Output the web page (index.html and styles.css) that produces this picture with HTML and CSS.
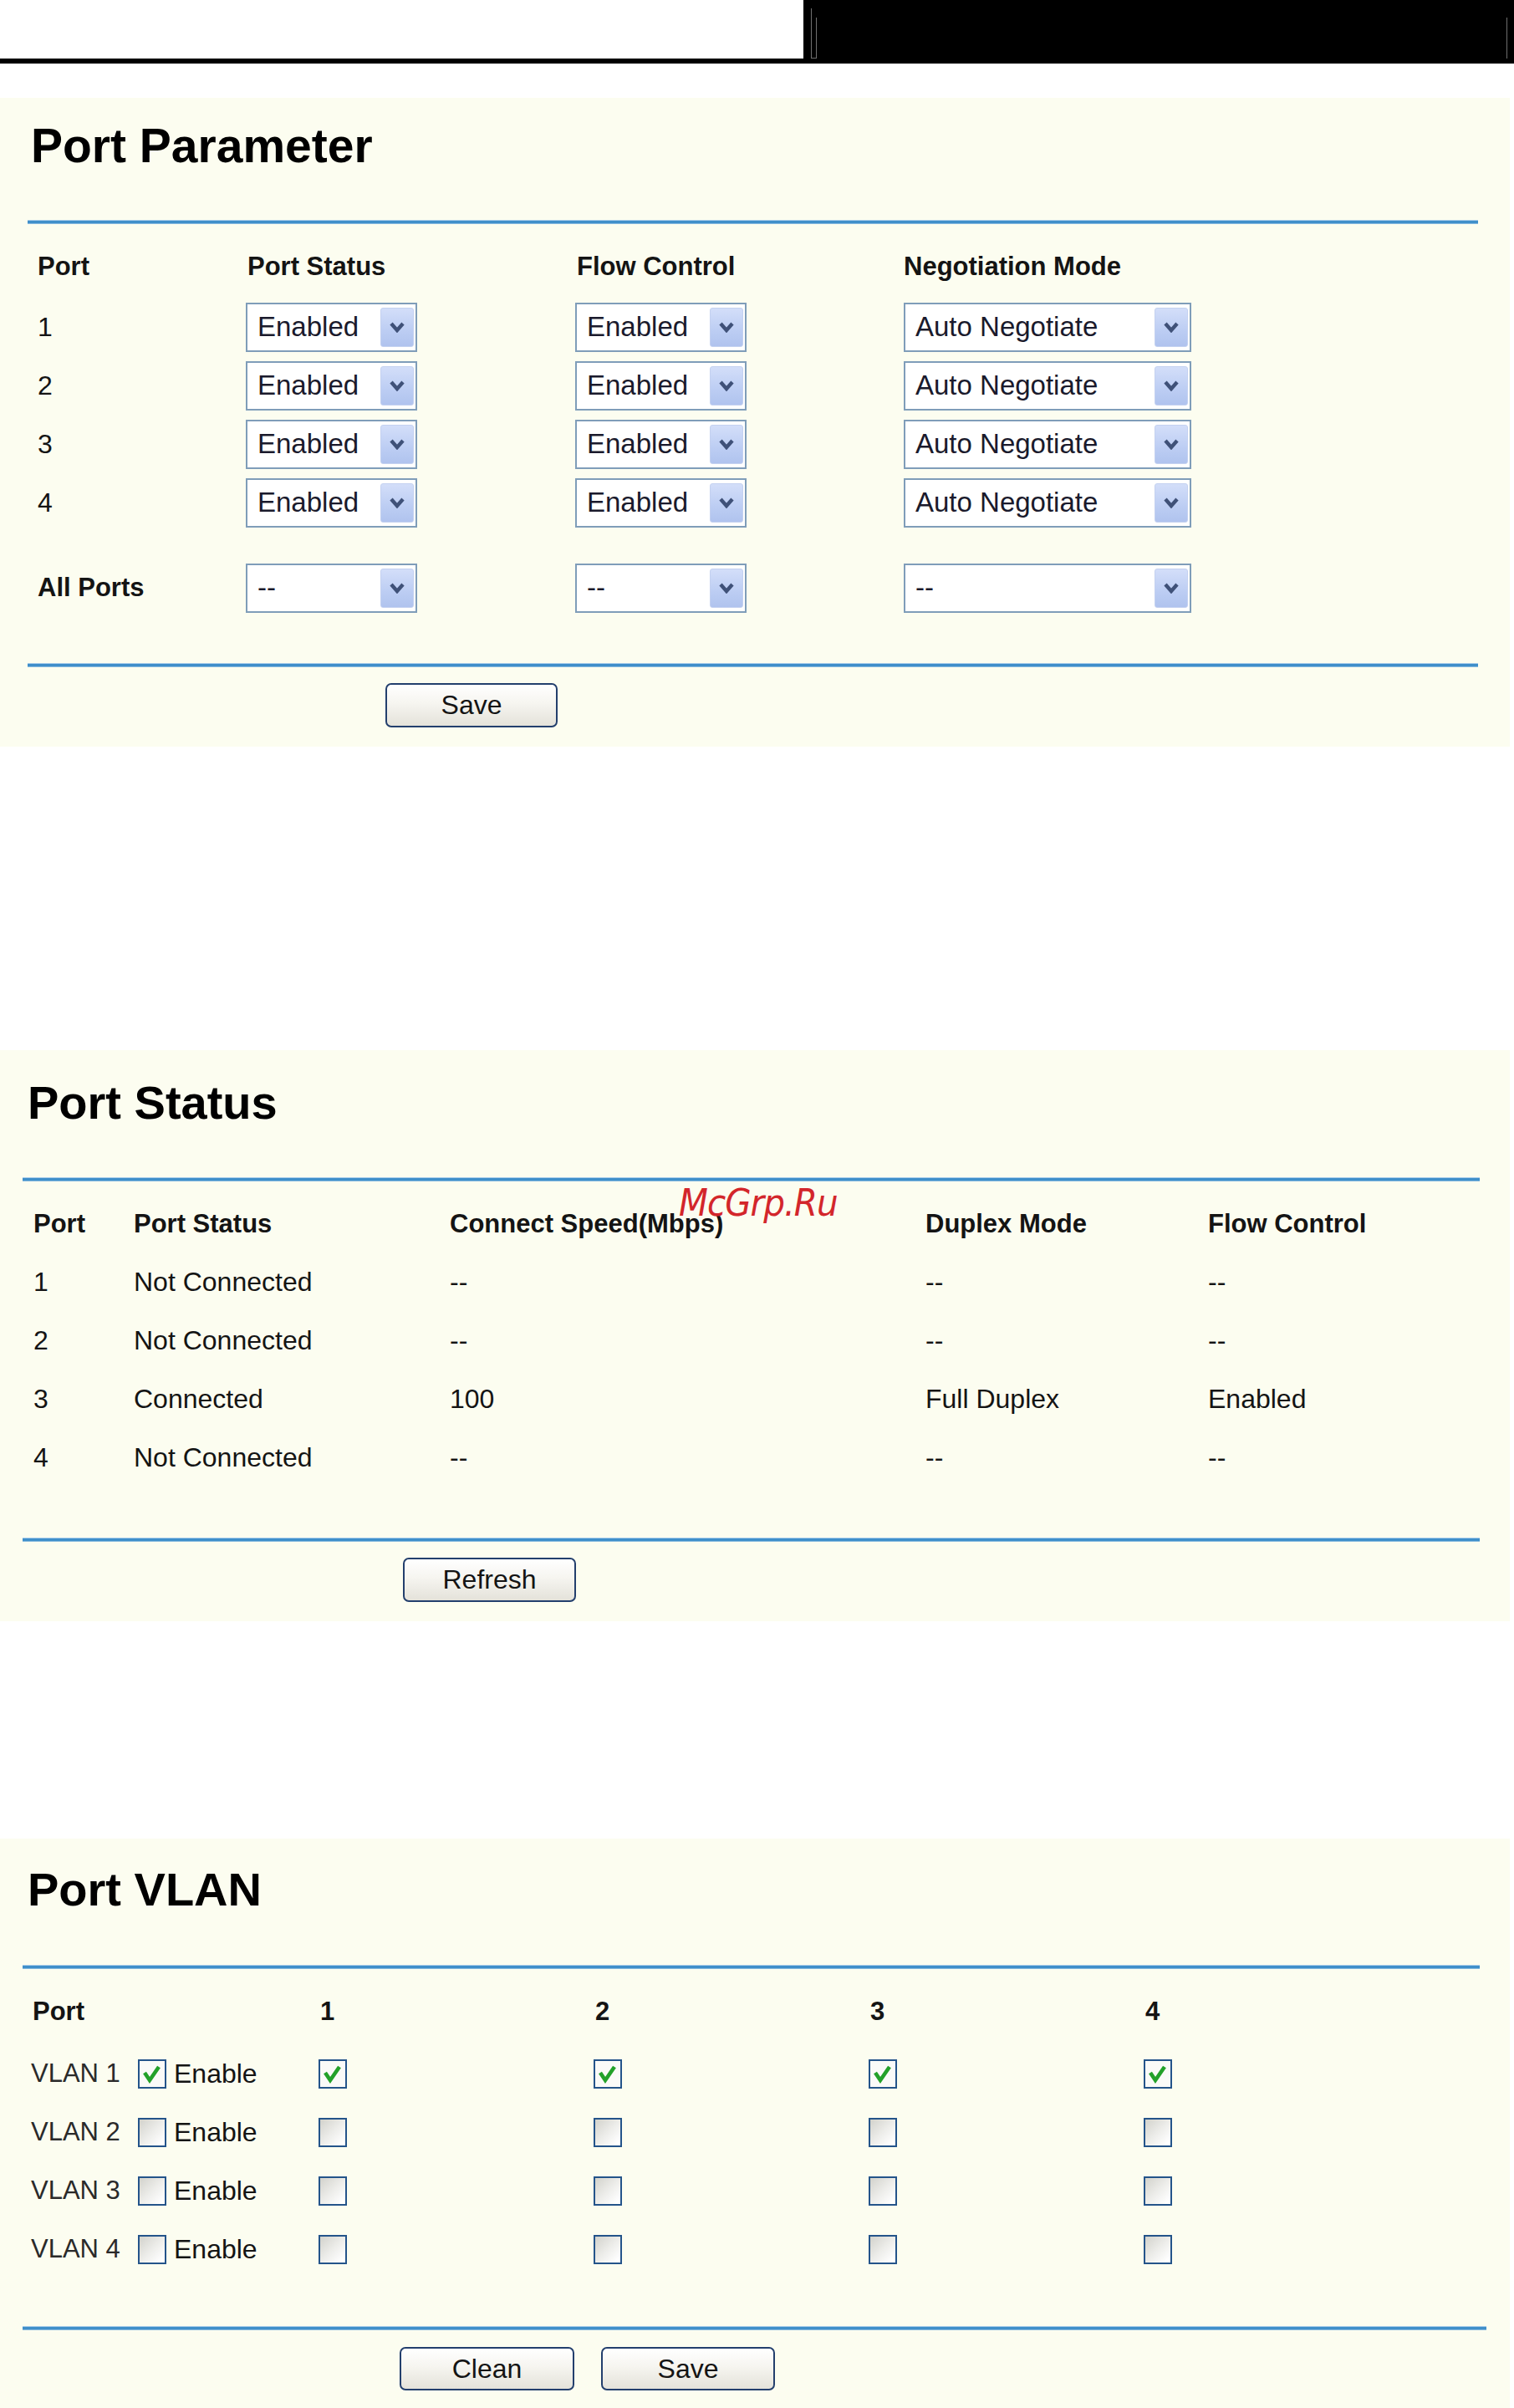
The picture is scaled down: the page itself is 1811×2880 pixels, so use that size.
FILE: index.html
```html
<!DOCTYPE html>
<html>
<head>
<meta charset="utf-8">
<title>Port Settings</title>
<link rel="stylesheet" href="styles.css">
</head>
<body>
<div class="topbar">
  <div class="topbar-left"></div>
  <div class="topbar-right"><div class="frame-a"></div><div class="frame-b"></div></div>
</div>

<section class="panel panel-param">
  <h1 class="title">Port Parameter</h1>
  <div class="rule"></div>
  <div class="prow phead">
    <div>Port</div><div class="hpad">Port Status</div><div class="hpad">Flow Control</div><div>Negotiation Mode</div>
  </div>
  <div class="prow"><div class="lbl">1</div>
    <div class="select"><span class="val">Enabled</span><span class="arrow"><svg width="20" height="14" viewBox="0 0 20 14"><polyline points="3,3 10,11 17,3" fill="none" stroke="#3f5178" stroke-width="4.4"/></svg></span></div>
    <div class="select"><span class="val">Enabled</span><span class="arrow"><svg width="20" height="14" viewBox="0 0 20 14"><polyline points="3,3 10,11 17,3" fill="none" stroke="#3f5178" stroke-width="4.4"/></svg></span></div>
    <div class="select wide"><span class="val">Auto Negotiate</span><span class="arrow"><svg width="20" height="14" viewBox="0 0 20 14"><polyline points="3,3 10,11 17,3" fill="none" stroke="#3f5178" stroke-width="4.4"/></svg></span></div>
  </div>
  <div class="prow"><div class="lbl">2</div>
    <div class="select"><span class="val">Enabled</span><span class="arrow"><svg width="20" height="14" viewBox="0 0 20 14"><polyline points="3,3 10,11 17,3" fill="none" stroke="#3f5178" stroke-width="4.4"/></svg></span></div>
    <div class="select"><span class="val">Enabled</span><span class="arrow"><svg width="20" height="14" viewBox="0 0 20 14"><polyline points="3,3 10,11 17,3" fill="none" stroke="#3f5178" stroke-width="4.4"/></svg></span></div>
    <div class="select wide"><span class="val">Auto Negotiate</span><span class="arrow"><svg width="20" height="14" viewBox="0 0 20 14"><polyline points="3,3 10,11 17,3" fill="none" stroke="#3f5178" stroke-width="4.4"/></svg></span></div>
  </div>
  <div class="prow"><div class="lbl">3</div>
    <div class="select"><span class="val">Enabled</span><span class="arrow"><svg width="20" height="14" viewBox="0 0 20 14"><polyline points="3,3 10,11 17,3" fill="none" stroke="#3f5178" stroke-width="4.4"/></svg></span></div>
    <div class="select"><span class="val">Enabled</span><span class="arrow"><svg width="20" height="14" viewBox="0 0 20 14"><polyline points="3,3 10,11 17,3" fill="none" stroke="#3f5178" stroke-width="4.4"/></svg></span></div>
    <div class="select wide"><span class="val">Auto Negotiate</span><span class="arrow"><svg width="20" height="14" viewBox="0 0 20 14"><polyline points="3,3 10,11 17,3" fill="none" stroke="#3f5178" stroke-width="4.4"/></svg></span></div>
  </div>
  <div class="prow"><div class="lbl">4</div>
    <div class="select"><span class="val">Enabled</span><span class="arrow"><svg width="20" height="14" viewBox="0 0 20 14"><polyline points="3,3 10,11 17,3" fill="none" stroke="#3f5178" stroke-width="4.4"/></svg></span></div>
    <div class="select"><span class="val">Enabled</span><span class="arrow"><svg width="20" height="14" viewBox="0 0 20 14"><polyline points="3,3 10,11 17,3" fill="none" stroke="#3f5178" stroke-width="4.4"/></svg></span></div>
    <div class="select wide"><span class="val">Auto Negotiate</span><span class="arrow"><svg width="20" height="14" viewBox="0 0 20 14"><polyline points="3,3 10,11 17,3" fill="none" stroke="#3f5178" stroke-width="4.4"/></svg></span></div>
  </div>
  <div class="prow allports"><div class="lbl bold">All Ports</div>
    <div class="select"><span class="val">--</span><span class="arrow"><svg width="20" height="14" viewBox="0 0 20 14"><polyline points="3,3 10,11 17,3" fill="none" stroke="#3f5178" stroke-width="4.4"/></svg></span></div>
    <div class="select"><span class="val">--</span><span class="arrow"><svg width="20" height="14" viewBox="0 0 20 14"><polyline points="3,3 10,11 17,3" fill="none" stroke="#3f5178" stroke-width="4.4"/></svg></span></div>
    <div class="select wide"><span class="val">--</span><span class="arrow"><svg width="20" height="14" viewBox="0 0 20 14"><polyline points="3,3 10,11 17,3" fill="none" stroke="#3f5178" stroke-width="4.4"/></svg></span></div>
  </div>
  <div class="rule rule-bottom"></div>
  <div class="btnrow btnrow-param"><button class="btn">Save</button></div>
</section>

<section class="panel panel-status">
  <div class="watermark">McGrp.Ru</div>
  <h1 class="title">Port Status</h1>
  <div class="rule"></div>
  <div class="srow shead"><div>Port</div><div>Port Status</div><div>Connect Speed(Mbps)</div><div>Duplex Mode</div><div>Flow Control</div></div>
  <div class="srow"><div>1</div><div>Not Connected</div><div>--</div><div>--</div><div>--</div></div>
  <div class="srow"><div>2</div><div>Not Connected</div><div>--</div><div>--</div><div>--</div></div>
  <div class="srow"><div>3</div><div>Connected</div><div>100</div><div>Full Duplex</div><div>Enabled</div></div>
  <div class="srow"><div>4</div><div>Not Connected</div><div>--</div><div>--</div><div>--</div></div>
  <div class="rule rule-bottom"></div>
  <div class="btnrow btnrow-status"><button class="btn">Refresh</button></div>
</section>

<section class="panel panel-vlan">
  <h1 class="title">Port VLAN</h1>
  <div class="rule"></div>
  <div class="vrow vhead"><div class="vport">Port</div><div>1</div><div>2</div><div>3</div><div>4</div></div>
  <div class="vrow">
    <div class="vlabel"><span class="vname">VLAN 1</span><span class="cb on"><svg width="30" height="31" viewBox="0 0 30 31"><path d="M6 14 L12 23 L23 7" fill="none" stroke="#23a12a" stroke-width="4.6"/></svg></span><span class="en">Enable</span></div>
    <div><span class="cb on"><svg width="30" height="31" viewBox="0 0 30 31"><path d="M6 14 L12 23 L23 7" fill="none" stroke="#23a12a" stroke-width="4.6"/></svg></span></div>
    <div><span class="cb on"><svg width="30" height="31" viewBox="0 0 30 31"><path d="M6 14 L12 23 L23 7" fill="none" stroke="#23a12a" stroke-width="4.6"/></svg></span></div>
    <div><span class="cb on"><svg width="30" height="31" viewBox="0 0 30 31"><path d="M6 14 L12 23 L23 7" fill="none" stroke="#23a12a" stroke-width="4.6"/></svg></span></div>
    <div><span class="cb on"><svg width="30" height="31" viewBox="0 0 30 31"><path d="M6 14 L12 23 L23 7" fill="none" stroke="#23a12a" stroke-width="4.6"/></svg></span></div>
  </div>
  <div class="vrow">
    <div class="vlabel"><span class="vname">VLAN 2</span><span class="cb"></span><span class="en">Enable</span></div>
    <div><span class="cb"></span></div><div><span class="cb"></span></div><div><span class="cb"></span></div><div><span class="cb"></span></div>
  </div>
  <div class="vrow">
    <div class="vlabel"><span class="vname">VLAN 3</span><span class="cb"></span><span class="en">Enable</span></div>
    <div><span class="cb"></span></div><div><span class="cb"></span></div><div><span class="cb"></span></div><div><span class="cb"></span></div>
  </div>
  <div class="vrow">
    <div class="vlabel"><span class="vname">VLAN 4</span><span class="cb"></span><span class="en">Enable</span></div>
    <div><span class="cb"></span></div><div><span class="cb"></span></div><div><span class="cb"></span></div><div><span class="cb"></span></div>
  </div>
  <div class="rule rule-bottom rule-long"></div>
  <div class="btnrow btnrow-vlan"><button class="btn btn-clean">Clean</button><button class="btn btn-save">Save</button></div>
</section>
</body>
</html>
```

FILE: styles.css
```css
html, body {
  margin: 0;
  padding: 0;
  background: #ffffff;
}
body {
  font-family: "Liberation Sans", Arial, sans-serif;
  color: #141414;
  width: 1811px;
  height: 2880px;
  overflow: hidden;
}

/* top bar */
.topbar {
  display: flex;
  height: 76px;
}
.topbar-left {
  width: 961px;
  height: 70px;
  border-bottom: 6px solid #000;
}
.topbar-right {
  flex: 1;
  background: #000;
  display: flex;
}
.frame-a {
  margin: 10px 0 6px 9px;
  width: 5px;
  border-left: 1px solid #6f6f6f;
  border-bottom: 1px solid #6f6f6f;
}
.frame-b {
  flex: 1;
  margin: 21px 8px 6px 0;
  border-left: 1px solid #6f6f6f;
  border-right: 1px solid #6f6f6f;
}

/* panels */
.panel {
  position: relative;
  width: 1806px;
  background: #fcfdf0;
  box-sizing: border-box;
}
.panel-param {
  margin-top: 41px;
  height: 776px;
  padding-top: 29px;
}
.panel-status {
  margin-top: 363px;
  height: 683px;
  padding-top: 35px;
}
.panel-vlan {
  margin-top: 260px;
  height: 681px;
  padding-top: 33px;
}

.title {
  margin: 0;
  font-size: 56px;
  line-height: 56px;
  font-weight: bold;
  color: #000;
  padding-left: 33px;
}
.panel-param .title { padding-left: 37px; font-size: 57px; }

.rule {
  height: 5px;
  margin-top: 61px;
  margin-left: 27px;
  width: 1743px;
  background: linear-gradient(#a9cdea 0, #a9cdea 1px, #3f8fca 1px, #3f8fca 4px, #86b9de 4px);
}
.panel-param .rule {
  margin-left: 33px;
  width: 1735px;
}
.panel-vlan .rule { margin-top: 62px; }
.rule-long { width: 1751px !important; }

/* Port parameter grid */
.prow {
  display: grid;
  grid-template-columns: 249px 394px 393px auto;
  padding-left: 45px;
  height: 70px;
  align-items: center;
  font-size: 32px;
}
.phead {
  margin-top: 16px;
  height: 72px;
  align-items: start;
  font-weight: bold;
  font-size: 31px;
  line-height: 70px;
}
.hpad { padding-left: 2px; }
.lbl {
  line-height: 66px;
}
.bold { font-weight: bold; font-size: 31px; }
.allports { margin-top: 32px; }
.panel-param .rule-bottom { margin-top: 55px; }

.select {
  display: flex;
  align-items: center;
  box-sizing: border-box;
  width: 205px;
  height: 59px;
  border: 2px solid #7f9db9;
  background: #fff;
  padding: 0 2px 0 12px;
  font-size: 33px;
  color: #1a1a2c;
}
.select.wide { width: 344px; }
.val {
  flex: 1;
  white-space: nowrap;
  overflow: hidden;
}
.arrow {
  width: 40px;
  height: 47px;
  box-sizing: border-box;
  border-radius: 3px;
  border: 1px solid #c4d1f0;
  background: linear-gradient(#d3def9, #bccdf3 60%, #b0c3ee);
  display: flex;
  align-items: center;
  justify-content: center;
}

/* buttons */
.btnrow {
  display: flex;
  gap: 32px;
}
.btnrow-param { margin-top: 19px; padding-left: 461px; }
.btnrow-status { margin-top: 19px; padding-left: 482px; }
.btnrow-vlan { margin-top: 20px; padding-left: 478px; }
.btn {
  box-sizing: border-box;
  width: 206px;
  height: 53px;
  border: 2px solid #233f6d;
  border-radius: 7px;
  background: linear-gradient(#ffffff, #f6f5f0 45%, #e4e2da);
  font-family: "Liberation Sans", Arial, sans-serif;
  font-size: 32px;
  color: #141414;
  padding: 0;
  margin: 0;
}
.btnrow-status .btn { width: 207px; }
.btn-clean { width: 209px; height: 52px; }
.btn-save { width: 208px; height: 52px; }

/* Port status */
.srow {
  display: grid;
  grid-template-columns: 120px 378px 569px 338px auto;
  padding-left: 40px;
  height: 70px;
  font-size: 32px;
  line-height: 70px;
  white-space: nowrap;
}
.shead {
  margin-top: 16px;
  height: 69px;
  font-weight: bold;
  font-size: 31px;
}
.panel-status .rule-bottom { margin-top: 61px; }

.watermark {
  position: absolute;
  left: 812px;
  top: 160px;
  font-size: 45px;
  line-height: 45px;
  font-style: italic;
  color: #d3262b;
  font-family: "DejaVu Sans", "Liberation Sans", sans-serif;
  font-stretch: condensed;
  letter-spacing: -1px;
}

/* Port VLAN */
.vrow {
  display: grid;
  grid-template-columns: 344px 329px 329px 329px auto;
  padding-left: 37px;
  height: 70px;
  align-items: center;
  font-size: 32px;
}
.vhead {
  margin-top: 16px;
  height: 74px;
  align-items: start;
  line-height: 70px;
  font-weight: bold;
  font-size: 31px;
}
.vhead > div { padding-left: 2px; }
.vlabel {
  display: flex;
  align-items: center;
}
.vname {
  width: 128px;
  color: #2a2a2a;
  font-size: 31px;
}
.en {
  margin-left: 9px;
}
.cb {
  display: block;
  box-sizing: border-box;
  width: 34px;
  height: 35px;
  border: 2px solid #24548a;
  background: linear-gradient(135deg, #d2d2cc 0%, #ededea 50%, #ffffff 90%);
}
.cb.on {
  background: #fafaf8;
}
.cb svg { display: block; }
.panel-vlan .rule-bottom { margin-top: 57px; }
```
